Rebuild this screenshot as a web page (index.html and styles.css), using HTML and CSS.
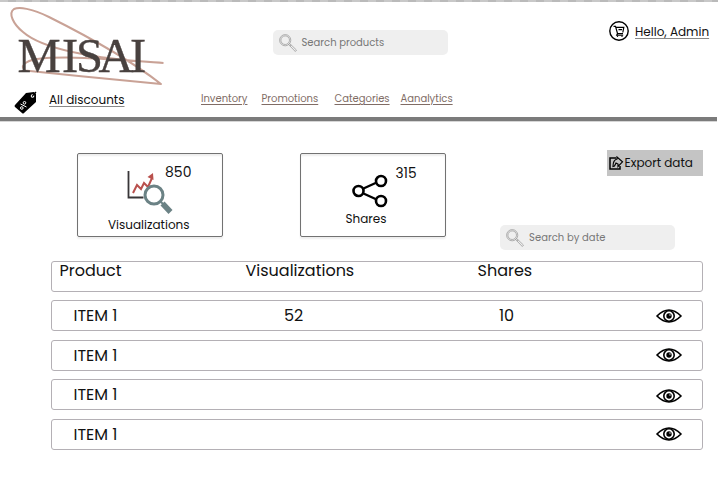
FILE: index.html
```html
<!DOCTYPE html>
<html lang="en">
<head>
<meta charset="utf-8">
<title>Misai analytics</title>
<link rel="stylesheet" href="styles.css">
</head>
<body>
<svg class="defs" width="0" height="0">
  <symbol id="eye" viewBox="0 0 26 14">
    <path d="M1 7Q7 1 13 1T25 7Q19 13 13 13T1 7Z" fill="#fff" stroke="#000" stroke-width="1.700" stroke-linejoin="round"/>
    <circle cx="13" cy="7" r="5.200" fill="none" stroke="#000" stroke-width="1.600"/>
    <circle cx="13" cy="7" r="2.700"/>
    <circle cx="14" cy="6" r=".7" fill="#fff"/>
  </symbol>
  <symbol id="search" viewBox="0 0 18 18">
    <g fill="none" stroke="#929292" stroke-width=".7">
      <circle cx="6.200" cy="6.200" r="5.600"/><circle cx="6.200" cy="6.200" r="4.300"/>
      <path d="M9.600 10.600l1-1 1.600 1.500-1 1zM11.200 12.200l1.100-1.100 5.200 5-1.200 1.400z"/>
    </g>
  </symbol>
</svg>
<header class="header">
  <div class="brand">
    <svg class="logo" width="160" height="84" viewBox="0 0 160 84">
      <path class="swirl" d="M154.500 59C110 56 60 51 28 55C15 57 11 63 16 66.500C60 71 110 76 152 80C120 55 80 33 40 13C22 4 10 3 5 5C-1 9 4 20 14 28C30 42 70 54 154.500 59"/>
      <text class="wordmark" x="8.500 53 67 89.500 121" y="68">MISAI</text>
    </svg>
    <div class="discounts">
      <svg width="24" height="23" viewBox="0 0 24 23">
        <path d="M1 14L12 2L20 1L22 3L22 11L10 22Q9 23 8 22L1 16Q0 15 1 14Z"/>
        <circle cx="18.500" cy="5" r="1.800" fill="#fff"/>
        <path d="M18 5.500L22 1" stroke="#000" stroke-width="1.200"/>
        <g fill="none" stroke="#fff" stroke-width="1"><circle cx="7.800" cy="17" r="1.300"/><circle cx="10.500" cy="11.800" r="1.300"/><path d="M6.500 13l6 3"/></g>
      </svg>
      <a class="link t-discounts">All discounts</a>
    </div>
  </div>
  <div class="center">
    <div class="search"><svg width="18" height="18"><use href="#search"/></svg><span class="t-products">Search products</span></div>
    <nav class="nav"><a class="n1">Inventory</a><a class="n2">Promotions</a><a class="n3">Categories</a><a class="n4">Aanalytics</a></nav>
  </div>
  <div class="account">
    <svg width="20" height="20" viewBox="0 0 20 20" fill="none" stroke="#000">
      <circle cx="10" cy="10" r="9.200" stroke-width="1.400"/>
      <path d="M4.500 5.300h2l2 7.200h5.500M6.800 6.300h8l-1 5.200M9.500 8.700h3.500M8.500 12.500l-.8 1.700h6.500" stroke-width="1.200"/>
      <circle cx="8.500" cy="15.200" r=".7" fill="#000" stroke="none"/><circle cx="13" cy="15.200" r=".7" fill="#000" stroke="none"/>
    </svg>
    <a class="link t-admin">Hello, Admin</a>
  </div>
</header>
<main class="main">
  <section class="summary">
    <article class="card">
      <div class="card-top">
        <svg class="chart" width="47" height="46" viewBox="0 0 47 46" fill="none">
          <path d="M2.500 2v26.500h15" stroke="#383638" stroke-width="1.800"/>
          <path d="M7 24l4-8 4 4 3-6 4 4 4-9" stroke="#b9504d" stroke-width="2"/>
          <path d="M21.500 8L27 4l.5 7z" fill="#b9504d"/>
          <circle cx="28" cy="26" r="9" fill="#fff" stroke="#6b8285" stroke-width="3"/>
          <path d="M35 33l2 2" stroke="#6b8285" stroke-width="2"/>
          <path d="M36.500 34.500l8 8.500" stroke="#6b8285" stroke-width="5.500"/>
        </svg>
        <span class="t-850">850</span>
      </div>
      <div class="card-label"><span class="t-vis">Visualizations</span></div>
    </article>
    <article class="card second">
      <div class="card-top">
        <svg class="share" width="36" height="34" viewBox="0 0 36 34" fill="#fff" stroke="#000" stroke-width="2.600">
          <path d="M28 7L6 17l22 10" stroke-width="2.300" fill="none"/>
          <circle cx="6.500" cy="17" r="5"/><circle cx="29" cy="7" r="5"/><circle cx="29" cy="27" r="5"/>
        </svg>
        <span class="t-315">315</span>
      </div>
      <div class="card-label label-shares"><span class="t-sh">Shares</span></div>
    </article>
    <div class="tools">
      <button class="export">
        <svg width="15" height="14" viewBox="0 0 15 14" fill="none" stroke="#000" stroke-width="1.500"><path d="M7 2H1v11h10v-3"/><path d="M8 3V1L13.500 5.800 9 10.500V8L7 7 5.500 10 4 10.500Q4 4 8 3Z" stroke-width="1.200"/></svg>
        <span class="t-export">Export data</span>
      </button>
      <div class="search"><svg width="18" height="18"><use href="#search"/></svg><span class="t-date">Search by date</span></div>
    </div>
  </section>
  <section class="table">
    <div class="row head"><span class="h1">Product</span><span class="h2">Visualizations</span><span class="h3">Shares</span></div>
    <div class="row"><span class="item">ITEM 1</span><span class="views">52</span><span class="shares">10</span><svg class="eye" width="26" height="14"><use href="#eye"/></svg></div>
    <div class="row"><span class="item">ITEM 1</span><svg class="eye" width="26" height="14"><use href="#eye"/></svg></div>
    <div class="row"><span class="item">ITEM 1</span><svg class="eye low" width="26" height="14"><use href="#eye"/></svg></div>
    <div class="row"><span class="item">ITEM 1</span><svg class="eye" width="26" height="14"><use href="#eye"/></svg></div>
  </section>
</main>
</body>
</html>
```
FILE: styles.css
```css
* { box-sizing: border-box; }
body { margin: 0; width: 718px; height: 486px; overflow: hidden; background: repeating-linear-gradient(90deg, #c8c8c8 0 8px, #bababa 8px 16px) 0 0 / 100% 2px no-repeat #fff; color: #111; font-family: Poppins, Inter, sans-serif; font-size: 12px; }
.defs { position: absolute; }
span, a { white-space: nowrap; }
svg { flex: none; display: block; }
.header { display: grid; grid-template-columns: 201px 407px 110px; height: 121px; width: 717px; padding-top: 2px; border-bottom: 4px solid #7b7b7b; box-shadow: 0 1px #d6d6d6; }
.brand { padding: 2px 0 0 9px; }
.logo { overflow: visible; }
.swirl { fill: none; stroke: #c9a296; stroke-width: 2; stroke-linejoin: round; }
.wordmark { font: 48.500px "Liberation Serif", serif; fill: #48413f; stroke: #48413f; stroke-width: .4; }
.discounts { display: flex; margin: 3px 0 0 5px; gap: 11px; }
.link { text-decoration: underline; text-decoration-color: #888; text-underline-offset: 2px; line-height: 18px; }
.center { padding-top: 28px; }
.search { display: flex; width: 175px; height: 25px; padding: 4px 6px; gap: 5px; align-items: center; background: #efefef; border-radius: 5px; color: #777; font-size: 10px; }
.center .search { margin-left: 71.500px; }
.nav { display: flex; margin-top: 35px; color: #806c65; font-size: 10px; line-height: 17px; }
.nav a { text-decoration: underline; text-underline-offset: 2px; }
.n1 { width: 60.500px; }
.n2 { width: 73px; }
.n3 { width: 66px; }
.account { display: flex; gap: 6px; padding: 19px 0 0 1px; }
.t-admin { line-height: 21px; }
.main { padding: 32px 15px 0 51px; }
.summary { display: flex; height: 108px; padding-left: 26px; }
.card { width: 146px; height: 84px; border: 1px solid #727272; border-radius: 2px; box-shadow: 0 2px 2px #eee, inset 0 2px 2px #eee; font-size: 14px; }
.second { margin-left: 77px; }
.card-top { display: flex; height: 61px; }
.chart { margin: 15px 0 0 48px; }
.share { margin: 20px 0 0 51px; }
.t-850 { margin: 8px 0 0 -8px; }
.t-315 { margin: 10px 0 0 7.500px; font-size: 13.700px; }
.card-label { padding-left: 30px; line-height: 20px; font-size: 12px; }
.label-shares { padding-left: 44.500px; margin-top: -6px; }
.tools { margin-left: 54px; margin-top: -3px; }
.export { display: flex; align-items: center; width: 96px; height: 26px; margin: 0 0 48.500px 107px; padding: 0 0 1px 2px; border: 0; background: #c4c4c4; color: #111; font: inherit; }
.t-export { margin-left: .5px; }
.tools .search { padding-top: 5px; padding-bottom: 3px; }
.t-date { letter-spacing: .03px; }
.table { display: grid; gap: 8.400px; font-size: 16px; }
.row { display: flex; align-items: center; height: 31px; border: 1px solid #b4b0b5; border-radius: 3px; padding: 0 20.500px 0 21.500px; }
.head { align-items: flex-start; padding: 0 7.500px; line-height: 17px; }
.h1 { width: 186px; }
.h2 { width: 232px; }
.item { width: 210.500px; }
.views { width: 215px; }
.eye { margin-left: auto; }
.low { margin-top: 2px; }
```
